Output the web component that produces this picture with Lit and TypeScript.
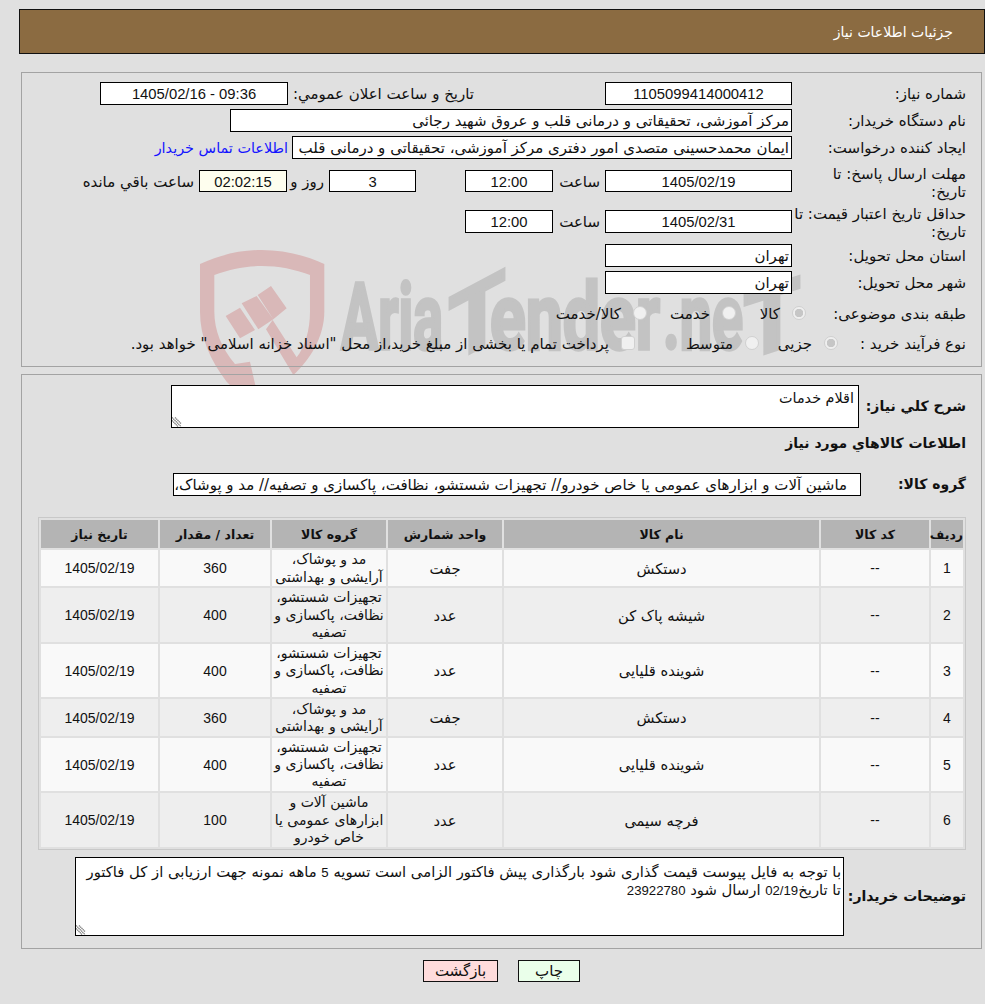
import { LitElement, html, css } from "lit";
import { customElement } from "lit/decorators.js";

const ROWS = [
  ["1", "--", "دستکش", "جفت", "مد و پوشاک، آرایشی و بهداشتی", "360", "1405/02/19"],
  ["2", "--", "شیشه پاک کن", "عدد", "تجهیزات شستشو، نظافت، پاکسازی و تصفیه", "400", "1405/02/19"],
  ["3", "--", "شوینده قلیایی", "عدد", "تجهیزات شستشو، نظافت، پاکسازی و تصفیه", "400", "1405/02/19"],
  ["4", "--", "دستکش", "جفت", "مد و پوشاک، آرایشی و بهداشتی", "360", "1405/02/19"],
  ["5", "--", "شوینده قلیایی", "عدد", "تجهیزات شستشو، نظافت، پاکسازی و تصفیه", "400", "1405/02/19"],
  ["6", "--", "فرچه سیمی", "عدد", "ماشین آلات و ابزارهای عمومی یا خاص خودرو", "100", "1405/02/19"],
];
const HEAD = ["ردیف", "کد کالا", "نام کالا", "واحد شمارش", "گروه کالا", "تعداد / مقدار", "تاریخ نیاز"];
const WIDTHS = [32, 108, 315, 114, 114, 110, 117];

const grip = html`<svg class="grip" width="10" height="10" viewBox="0 0 10 10" aria-hidden="true">
  <path d="M0 3.5L6 9.5M0 .5L9 9.5M3 .5L9 6.5" stroke="#777" stroke-width="1.2" fill="none" stroke-dasharray="1.3 .5"/>
</svg>`;

@customElement("app-root")
export class AppRoot extends LitElement {
  static styles = css`
    :host {
      display: block;
      position: relative;
      width: 985px;
      height: 1004px;
      overflow: hidden;
      background: #e0e0e0;
      color: #111;
      font: 15px/17px "DejaVu Sans", sans-serif;
      direction: rtl;
    }
    .num { font-family: "Liberation Sans", "DejaVu Sans", sans-serif; font-size: 14.8px; }
    .wm { position: absolute; left: 0; top: 0; z-index: 0; }
    .wm text { font-family: "Roboto", sans-serif; font-weight: 700; fill: #c3c3c3; stroke: #c3c3c3; stroke-width: 3.5px; }
    .page { position: relative; z-index: 1; display: flex; flex-direction: column; padding-top: 9px; }
    .hdr {
      box-sizing: border-box; height: 45px; width: 966px; flex: none;
      background: #8b6b41; border: 1px solid #111; color: #fff;
      padding: 14px 31px 0 0; font-size: 14px;
    }
    .panel { box-sizing: border-box; margin-right: 3px; width: 961px; border: 1px solid #a3a3a3; padding-right: 15px; flex: none; }
    .p1 {
      margin-top: 18px; height: 295px; padding-top: 9px;
      display: grid;
      grid-template-rows: 27px 27px 34px 40px 34px 27px 30px 30px;
      align-items: start;
    }
    .p2 { margin-top: 7px; height: 575px; padding-top: 10px; display: flex; flex-direction: column; }
    .row { display: flex; align-items: flex-start; flex: none; }
    .lbl { width: 174px; flex: none; line-height: 17px; padding-top: 4px; box-sizing: border-box; }
    .lbl.wrap { padding-top: 0; margin-top: -5px; line-height: 18px; white-space: nowrap; }
    .lbl.r8 { width: 160px; padding-top: 5px; }
    .lbl.r9 { width: 128px; padding-top: 5px; }
    .f {
      box-sizing: border-box; height: 23px; border: 1px solid #000; background: #fff;
      line-height: 21px; padding: 1px 2px 0; white-space: nowrap; overflow: hidden; flex: none;
    }
    .f.h22 { height: 22px; line-height: 20px; }
    .c { text-align: center; }
    .w187 { width: 187px; }
    .w188 { width: 188px; }
    .w562 { width: 562px; }
    .w500 { width: 500px; }
    .w88 { width: 88px; }
    .w87 { width: 87px; }
    .t { flex: none; padding-top: 4px; white-space: nowrap; }
    .ann { margin-right: 131px; width: 181px; }
    .mr5 { margin-right: 5px; }
    .mr4 { margin-right: 4px; }
    .mr49 { margin-right: 49px; }
    .sa { width: 47px; margin-right: 5px; }
    .rz { width: 37px; margin-right: 5px; }
    .time { background: #fefeee; }
    a { color: #1414ff; text-decoration: none; font-size: 14.4px; }
    .opt { display: flex; align-items: center; flex: none; height: 27px; }
    .opt .rd {
      appearance: none; margin: -3px 0 0 12px; width: 14px; height: 14px; flex: none; border-radius: 50%;
      border: 1.5px solid #d0d0d0; background: #f0f0f0; box-sizing: border-box;
    }
    .opt .rd:checked { background: radial-gradient(circle, #c6c6c6 0 4px, #efefef 4.5px); }
    .opt .ck { border-radius: 3px; }
    .o70 { width: 70px; } .o89 { width: 89px; } .o79 { width: 79px; } .o124 { width: 124px; }
    .sum { font-weight: 700; font-size: 14px; }
    .ta {
      position: relative; box-sizing: border-box; border: 1px solid #000; background: #fff; margin: 0;
      overflow: hidden; flex: none;
    }
    .grip { position: absolute; left: 0; bottom: 0; }
    .ta1 { width: 688px; height: 43px; padding: 4px 4px; font-size: 14.4px; }
    .ta2 { width: 769px; height: 79px; padding: 5px 2px; font-size: 14.8px; }
    .ta2 .num { font-size: 13.2px; }
    .s1 { width: 107px; flex: none; padding-top: 13px; }
    .sec { margin-top: 7px; height: 29px; flex: none; }
    .g { margin-top: 9px; }
    .s2 { width: 105px; flex: none; padding-top: 3px; }
    .gf { width: 688px; padding-right: 13px; }
    table { margin: 21px 0 0 0; border-collapse: separate; border-spacing: 2px; table-layout: fixed; width: 928px; border: 1px solid #c8c8c8; background: #e0e0e0; flex: none; }
    th { background: #b4b4b4; height: 28px; padding: 0; font-size: 12.5px; font-weight: 700; text-align: center; }
    td { padding: 1.2px 0 0.4px; text-align: center; line-height: 17.33px; font-size: 14.7px; }
    td.grp { font-size: 14px; }
    tbody tr:nth-child(odd) td { background: #f9f9f9; }
    tbody tr:nth-child(even) td { background: #eee; }
    td .num { font-size: 14px; }
    .d { margin-top: 7px; align-items: center; }
    .s3 { width: 122px; flex: none; }
    .btns { display: flex; gap: 20px; padding: 11px 405px 0 0; flex: none; }
    .b { box-sizing: border-box; height: 22px; border: 1px solid #111; text-align: center; line-height: 21px; }
    .pr { width: 62px; background: #eaffea; }
    .bk { width: 75px; background: #ffdcdc; }
  `;

  render() {
    return html`
      <svg class="wm" width="985" height="460" viewBox="0 0 985 460" direction="ltr" aria-hidden="true">
        <g transform="translate(190 240) scale(.3333)">
          <path fill="#d9b8b8" fill-rule="evenodd" d="M30 72C90 45 150 30 215 30C280 30 345 45 403 72V215C403 290 360 360 310 405L228 268L248 240L320 352C345 320 360 270 360 215V105C315 88 265 78 215 78C165 78 118 88 73 105V215C73 270 95 325 135 372L180 365L197 440H125L110 425C60 360 30 290 30 215Z"/>
          <path fill="#d9b8b8" d="M107 228L150 203L195 270L150 295ZM155 190L200 168L250 238L205 268ZM203 165L243 138L290 205L250 238Z"/>
        </g>
        <text x="341" y="349" font-size="92" textLength="102" lengthAdjust="spacingAndGlyphs">Aria</text>
        <text x="0" y="0" font-size="92" text-anchor="middle" transform="translate(477 349) skewY(-28)">T</text>
        <text x="490" y="349" font-size="92" textLength="170" lengthAdjust="spacingAndGlyphs">ender</text>
        <text x="663" y="349" font-size="92" textLength="80" lengthAdjust="spacingAndGlyphs">.ne</text>
        <text x="0" y="0" font-size="92" text-anchor="middle" transform="translate(772 351) skewY(-18)">T</text>
      </svg>
      <div class="page">
        <div class="hdr">جزئیات اطلاعات نیاز</div>
        <section class="panel p1">
          <div class="row">
            <div class="lbl">شماره نیاز:</div>
            <div class="f w187 c"><span class="num">1105099414000412</span></div>
            <div class="t ann">تاریخ و ساعت اعلان عمومي:</div>
            <div class="f w188 c mr5"><span class="num">09:36 - 1405/02/16</span></div>
          </div>
          <div class="row"><div class="lbl">نام دستگاه خریدار:</div><div class="f w562">مرکز آموزشی، تحقیقاتی و درمانی قلب و عروق شهید رجائی</div></div>
          <div class="row"><div class="lbl">ایجاد کننده درخواست:</div><div class="f w500">ایمان محمدحسینی متصدی امور دفتری مرکز آموزشی، تحقیقاتی و درمانی قلب</div><a class="t mr4" href="#">اطلاعات تماس خریدار</a></div>
          <div class="row">
            <div class="lbl wrap">مهلت ارسال پاسخ: تا<br />تاریخ:</div>
            <div class="f h22 w187 c"><span class="num">1405/02/19</span></div>
            <div class="t sa">ساعت</div>
            <div class="f h22 w88 c"><span class="num">12:00</span></div>
            <div class="f h22 w87 c mr49"><span class="num">3</span></div>
            <div class="t rz">روز و</div>
            <div class="f h22 w88 c time"><span class="num">02:02:15</span></div>
            <div class="t mr5">ساعت باقي مانده</div>
          </div>
          <div class="row">
            <div class="lbl wrap">حداقل تاریخ اعتبار قیمت: تا<br />تاریخ:</div>
            <div class="f w187 c"><span class="num">1405/02/31</span></div>
            <div class="t sa">ساعت</div>
            <div class="f w88 c"><span class="num">12:00</span></div>
          </div>
          <div class="row"><div class="lbl">استان محل تحویل:</div><div class="f w187">تهران</div></div>
          <div class="row"><div class="lbl">شهر محل تحویل:</div><div class="f w187">تهران</div></div>
          <div class="row">
            <div class="lbl r8">طبقه بندی موضوعی:</div>
            <label class="opt o70"><input class="rd" type="radio" name="cat" checked disabled />کالا</label>
            <label class="opt o89"><input class="rd" type="radio" name="cat" disabled />خدمت</label>
            <label class="opt"><input class="rd" type="radio" name="cat" disabled />کالا/خدمت</label>
          </div>
          <div class="row">
            <div class="lbl r9">نوع فرآیند خرید :</div>
            <label class="opt o79"><input class="rd" type="radio" name="proc" checked disabled />جزیی</label>
            <label class="opt o124"><input class="rd" type="radio" name="proc" disabled />متوسط</label>
            <label class="opt"><input class="rd ck" type="checkbox" disabled />پرداخت تمام یا بخشی از مبلغ خرید،از محل "اسناد خزانه اسلامی" خواهد بود.</label>
          </div>
        </section>
        <section class="panel p2">
          <div class="row">
            <div class="s1 sum">شرح کلي نياز:</div>
            <div class="ta ta1">اقلام خدمات${grip}</div>
          </div>
          <div class="sec sum">اطلاعات کالاهاي مورد نياز</div>
          <div class="row g">
            <div class="s2 sum">گروه کالا:</div>
            <div class="f gf">ماشین آلات و ابزارهای عمومی یا خاص خودرو// تجهیزات شستشو، نظافت، پاکسازی و تصفیه// مد و پوشاک، آرایشی و بهداشتی</div>
          </div>
          <table>
            <colgroup>${WIDTHS.map((w) => html`<col style="width:${w}px" />`)}</colgroup>
            <thead><tr>${HEAD.map((h) => html`<th>${h}</th>`)}</tr></thead>
            <tbody>
              ${ROWS.map((r) => html`<tr>${r.map((v, i) => html`<td class=${i === 4 ? "grp" : ""}>${[0, 1, 5, 6].includes(i) ? html`<span class="num">${v}</span>` : v}</td>`)}</tr>`)}
            </tbody>
          </table>
          <div class="row d">
            <div class="s3 sum">توضیحات خریدار:</div>
            <div class="ta ta2">با توجه به فایل پیوست قیمت گذاری شود بارگذاری پیش فاکتور الزامی است تسویه <span class="num">5</span> ماهه نمونه جهت ارزیابی از کل فاکتور تا تاریخ<span class="num">02/19</span> ارسال شود <span class="num">23922780</span>${grip}</div>
          </div>
        </section>
        <div class="btns">
          <div class="b pr">چاپ</div>
          <div class="b bk">بازگشت</div>
        </div>
      </div>
    `;
  }
}
